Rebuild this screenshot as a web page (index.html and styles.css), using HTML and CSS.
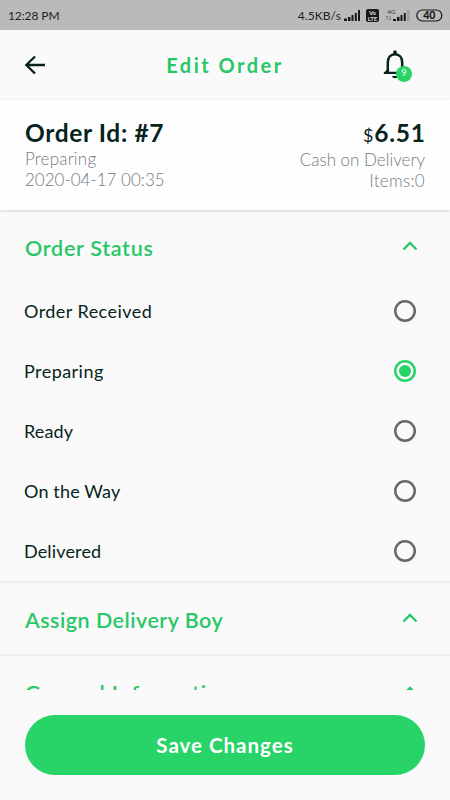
FILE: index.html
```html
<!DOCTYPE html>
<html lang="en">
<head>
<meta charset="utf-8">
<title>Edit Order</title>
<link rel="stylesheet" href="styles.css">
</head>
<body>
<div class="screen">
  <div class="status">
    <span class="clock">12:28 PM</span>
    <div class="indicators">
      <span class="speed">4.5KB/s</span>
      <svg class="signals" width="102" height="16" viewBox="0 0 102 16">
        <g fill="#181818">
          <path d="M1 14V11.500H4V14zM5 14V10H7.500V14zM8.500 14V8H10.500V14zM11.800 14V6H13.800V14zM15 14V3H17V14z"/>
          <rect x="23" y="2" width="13" height="13" rx="2"/>
          <path d="M50 14V12H53V14zM54 14V10H56.500V14zM57.500 14V8H59.500V14zM60.800 14V6H62.800V14z"/>
        </g>
        <path d="M64 14V3H66.500V14z" fill="#9d9d9d"/>
        <path d="M44 9V13M42.800 10.200L44 9L45.200 10.200M47 9V13M45.800 12L47 13L48.200 12" fill="none" stroke="#777" stroke-width=".8"/>
        <text x="29.500" y="8.200" class="tiny light">Vo</text>
        <text x="29.500" y="14" class="tiny light">LTE</text>
        <text x="48.500" y="6.500" class="tiny net">4G</text>
        <rect x="73.800" y="3" width="25" height="11" rx="5.500" fill="none" stroke="#181818" stroke-width="1.200"/>
        <text x="86.300" y="12.300" class="battery">40</text>
      </svg>
    </div>
  </div>

  <header class="appbar">
    <svg class="back" width="24" height="24" viewBox="0 0 24 24"><path d="M22 12H3.500M12 3.500L3.300 12L12 20.500" fill="none" stroke="#06231c" stroke-width="2.300"/></svg>
    <h1 class="title">Edit Order</h1>
    <div class="bell">
      <svg width="26" height="32" viewBox="0 0 26 32"><path d="M5.800 23V13.500C5.800 8.500 8.500 5.200 13 5.200S20.200 8.500 20.200 13.500V23" fill="none" stroke="#06231c" stroke-width="2.500"/><path d="M1.700 25V23.700L5.200 20.500V22.700H24.300V25zM11.200 5V3Q11.200 1.200 13 1.200T14.800 3V5zM10 27H16Q15.700 29.200 13 29.200T10 27z" fill="#06231c"/></svg>
      <span class="badge">9</span>
    </div>
  </header>

  <section class="summary">
    <div>
      <div class="big order-id">Order Id: #7</div>
      <div class="meta state">Preparing</div>
      <div class="meta">2020-04-17 00:35</div>
    </div>
    <div class="right">
      <div class="big price"><span class="currency">$</span>6.51</div>
      <div class="meta">Cash on Delivery</div>
      <div class="meta items">Items:0</div>
    </div>
  </section>

  <main class="panels">
    <section class="panel">
      <div class="head"><h2>Order Status</h2><svg class="chev" width="16" height="10" viewBox="0 0 16 10"><path d="M1.500 8.500L8 2L14.500 8.500" /></svg></div>
      <div class="option wide"><span>Order Received</span><i class="radio"></i></div>
      <div class="option wide"><span>Preparing</span><i class="radio on"></i></div>
      <div class="option"><span>Ready</span><i class="radio"></i></div>
      <div class="option"><span>On the Way</span><i class="radio"></i></div>
      <div class="option"><span>Delivered</span><i class="radio"></i></div>
    </section>
    <section class="panel">
      <div class="head"><h2>Assign Delivery Boy</h2><svg class="chev" width="16" height="10" viewBox="0 0 16 10"><path d="M1.500 8.500L8 2L14.500 8.500" /></svg></div>
    </section>
    <section class="panel general">
      <div class="head"><h2>General Information</h2><svg class="chev" width="16" height="10" viewBox="0 0 16 10"><path d="M1.500 8.500L8 2L14.500 8.500" /></svg></div>
    </section>
  </main>

  <footer class="footer"><button class="save">Save Changes</button></footer>
</div>
</body>
</html>
```
FILE: styles.css
```css
* { box-sizing: border-box; }
body { margin: 0; background: #fafafa; font-family: Lato, "Liberation Sans", sans-serif; color: #06231c; }
.screen { width: 450px; height: 800px; display: flex; flex-direction: column; overflow: hidden; }
.status { height: 30px; flex: none; background: #bababa; display: flex; align-items: center; justify-content: space-between; padding: 0 5px 0 8px; color: #222; font-size: 12px; }
.clock { letter-spacing: -.1px; }
.indicators { display: flex; align-items: center; }
.speed { letter-spacing: .1px; font-size: 12px; }
.signals { margin-left: 2px; }
.tiny { font-size: 6px; font-weight: 700; text-anchor: middle; }
.light { fill: #ddd; }
.net { font-weight: 400; fill: #333; }
.battery { font-size: 10.5px; font-weight: 900; text-anchor: middle; fill: #181818; }
.appbar { height: 70px; flex: none; display: flex; align-items: center; justify-content: space-between; padding: 0 42px 0 23px; }
.title { margin: 0 0 0 21px; font-size: 20px; font-weight: 700; letter-spacing: 2.5px; color: #28c767; }
.bell { position: relative; width: 26px; height: 32px; }
.badge { position: absolute; left: 14px; top: 17px; width: 16px; height: 16px; border-radius: 50%; background: #28d468; color: #fff; font-size: 9.5px; line-height: 13px; text-align: center; }
.summary { height: 110px; flex: none; background: #fefefe; box-shadow: 0 1px 3px rgba(0,0,0,.16); display: flex; justify-content: space-between; padding: 18px 25px 0; position: relative; }
.right { text-align: right; }
.big { height: 30px; line-height: 30px; font-size: 24.5px; font-weight: 700; white-space: nowrap; }
.order-id { letter-spacing: .64px; }
.price { letter-spacing: .8px; margin-right: -.8px; }
.currency { font-size: 18px; font-weight: 400; }
.meta { height: 21px; line-height: 21px; font-size: 17px; font-weight: 300; color: #747a83; white-space: nowrap; }
.state { letter-spacing: .2px; }
.right .items { letter-spacing: .3px; }
.right .meta { padding-top: 1px; }
.panels { height: 480px; flex: none; overflow: hidden; }
.panel { border-bottom: 2px solid #eeeef0; }
.head { height: 71px; display: flex; align-items: center; justify-content: space-between; padding: 2px 32px 0 25px; }
.panel:first-child .head { padding-top: 5px; }
.head h2 { margin: 0; font-size: 21.5px; line-height: 28px; font-weight: 600; letter-spacing: .48px; color: #28c767; white-space: nowrap; }
.panel:first-child h2 { letter-spacing: .7px; }
.general .head { padding-top: 3px; }
.general h2 { letter-spacing: .9px; }
.chev { fill: none; stroke: #28c767; stroke-width: 2.4; margin-bottom: 4px; }
.option { height: 60px; display: flex; align-items: center; justify-content: space-between; padding: 0 34px 0 24px; font-size: 18px; letter-spacing: .15px; }
.wide { letter-spacing: .45px; }
.radio { width: 22px; height: 22px; box-shadow: inset 0 0 0 2.5px #68686b; border-radius: 50%; display: grid; place-items: center; }
.on { box-shadow: inset 0 0 0 2.5px #28d468; }
.on::after { content: ""; width: 12px; height: 12px; border-radius: 50%; background: #28d468; }
.footer { flex: 1; padding: 25px; }
.save { display: block; width: 400px; height: 60px; border: 0; border-radius: 30px; background: #28d468; color: #fff; font: 700 20.5px Lato, "Liberation Sans", sans-serif; letter-spacing: 1px; }
```
